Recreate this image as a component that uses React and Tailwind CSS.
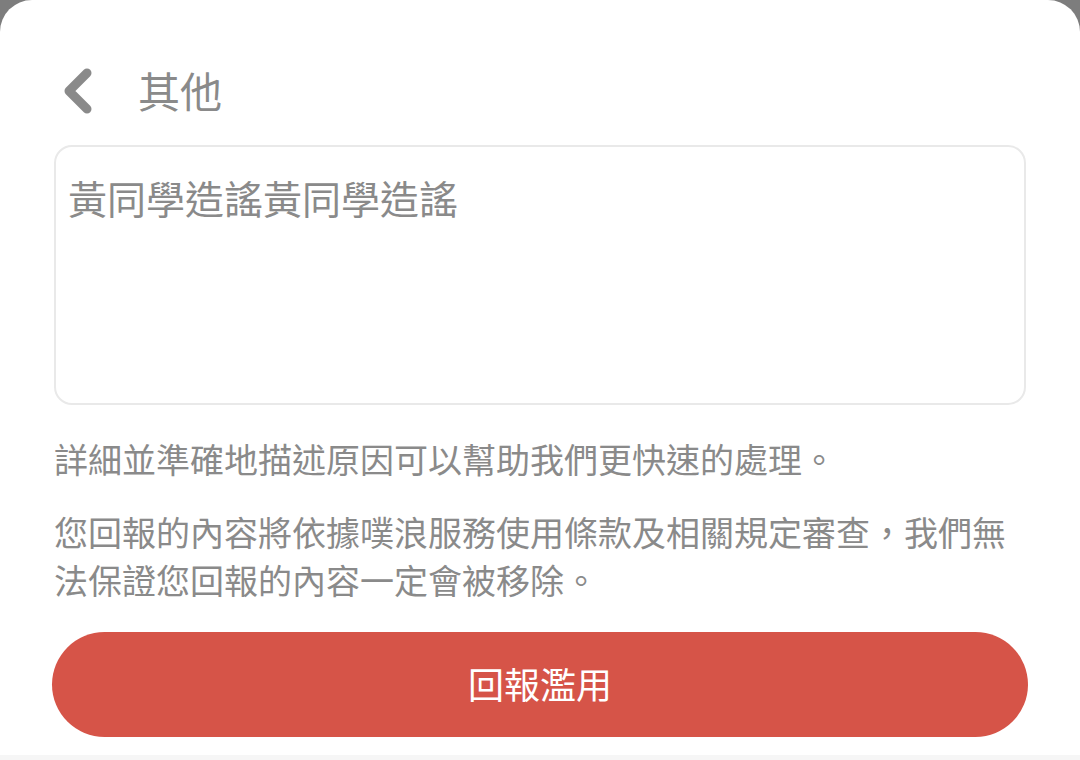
export default function App() {
  return (
    <div
      className="w-[1080px] h-[760px] bg-[#7d7d7d] flex flex-col overflow-hidden"
      style={{ fontFamily: '"Noto Sans CJK TC", "Noto Sans CJK SC", sans-serif' }}
    >
      <div className="flex-1 bg-white rounded-t-[32px] flex flex-col px-[54px]">
        <div className="flex items-center h-[46px] mt-[68px]">
          <svg width="40" height="46" viewBox="0 0 40 46" className="ml-[4px] shrink-0">
            <path d="M29 5 L11 23 L29 41" fill="none" stroke="#8a8a8a" strokeWidth="9" strokeLinecap="round" strokeLinejoin="round" />
          </svg>
          <div className="ml-[40px] mb-[2px] text-[42px] leading-none text-[#8a8a8a]">其他</div>
        </div>
        <div className="mt-[31px] h-[260px] border-2 border-[#e9e9e9] rounded-[18px] pl-[12px] pt-[27px]">
          <div className="text-[39px] leading-[46px] text-[#8a8a8a]">黃同學造謠黃同學造謠</div>
        </div>
        <p className="mt-[30px] text-[34px] leading-[48px] text-[#8a8a8a]">
          詳細並準確地描述原因可以幫助我們更快速的處理。
        </p>
        <p className="mt-[25px] text-[34px] leading-[48px] text-[#8a8a8a]">
          您回報的內容將依據噗浪服務使用條款及相關規定審查，我們無法保證您回報的內容一定會被移除。
        </p>
        <button className="mt-[28px] -mx-[2px] h-[105px] pb-[4px] rounded-full bg-[#d65448] text-white text-[36px] leading-none flex items-center justify-center">
          回報濫用
        </button>
      </div>
      <div className="h-[5px] bg-[#f6f6f6]" />
    </div>
  );
}
